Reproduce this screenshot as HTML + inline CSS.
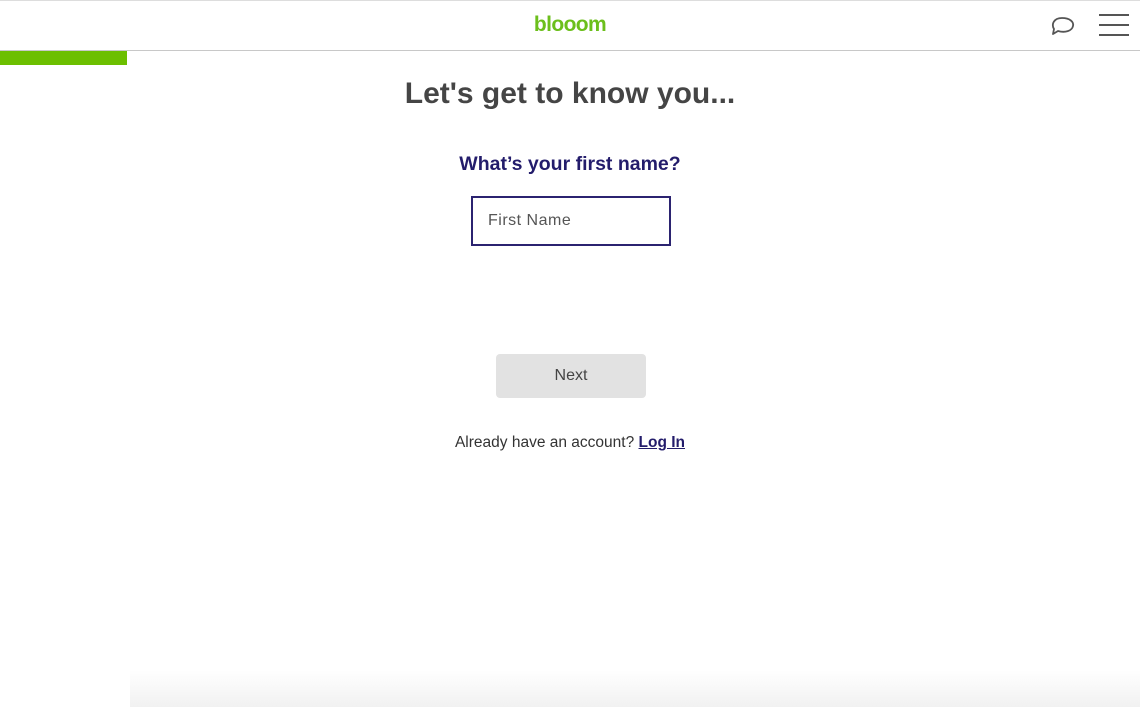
<!DOCTYPE html>
<html style="overflow:hidden;width:1140px;height:707px"><head><style>
body{margin:0;width:1140px;height:707px;overflow:hidden;background:#fff;font-family:"Liberation Sans",sans-serif;position:relative}
.top{position:absolute;left:0;top:0;width:1140px;height:1px;background:#ddd}
.hdr{position:absolute;left:0;top:50px;width:1140px;height:1px;background:#c8c8c8}
.logo{position:absolute;left:0;width:1140px;top:13px;text-align:center;color:#6cbf1c;font-size:21px;font-weight:bold;letter-spacing:-0.6px}
.prog{position:absolute;left:0;top:51px;width:127px;height:14px;background:#6cbf00}
h1{position:absolute;top:77px;left:0;width:1140px;text-align:center;margin:0;font-size:30px;color:#454545;font-weight:bold}
h2{position:absolute;top:153px;left:0;width:1140px;text-align:center;margin:0;font-size:19.5px;color:#231c6b;font-weight:bold}
.inp{position:absolute;left:471px;top:196px;width:196px;height:46px;border:2px solid #2b2370}
.inp span{position:absolute;left:15px;top:14px;font-size:16px;color:#555;letter-spacing:0.5px}
.btn{position:absolute;left:496px;top:354px;width:150px;height:44px;background:#e2e2e2;border-radius:4px;text-align:center;line-height:44px;font-size:16px;color:#444}
.acc{position:absolute;top:434px;left:0;width:1140px;text-align:center;font-size:15.5px;color:#333}
.acc a{color:#231c6b;font-weight:bold;text-decoration:underline}
.shadow{position:absolute;left:130px;top:670px;width:1010px;height:37px;background:linear-gradient(#fff,#f1f1f1)}
</style></head><body>
<div class="top"></div>
<div class="logo">blooom</div>
<svg style="position:absolute;left:1049px;top:14px" width="28" height="24" viewBox="0 0 28 24"><path d="M4 20 L5 15 C2 10 5 4 13 4 C21 4 25 8 24 12 C23 17 16 19 9 17 Z" fill="none" stroke="#555" stroke-width="1.8" stroke-linejoin="round"/></svg>
<div style="position:absolute;left:1099px;top:14px;width:30px;height:2px;background:#555"></div>
<div style="position:absolute;left:1099px;top:24px;width:30px;height:2px;background:#555"></div>
<div style="position:absolute;left:1099px;top:34px;width:30px;height:2px;background:#555"></div>
<div class="hdr"></div>
<div class="prog"></div>
<h1>Let's get to know you...</h1>
<h2>What’s your first name?</h2>
<div class="inp"><span>First Name</span></div>
<div class="btn">Next</div>
<div class="acc">Already have an account? <a>Log In</a></div>
<div class="shadow"></div>
</body></html>
